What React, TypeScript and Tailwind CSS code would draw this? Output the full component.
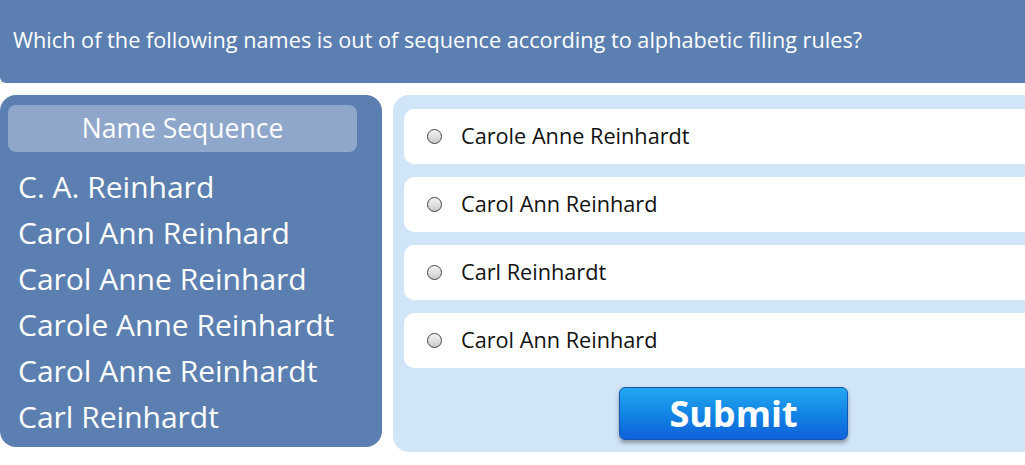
import React from 'react';

const names = [
    'C. A. Reinhard',
    'Carol Ann Reinhard',
    'Carol Anne Reinhard',
    'Carole Anne Reinhardt',
    'Carol Anne Reinhardt',
    'Carl Reinhardt',
];

const options = ['Carole Anne Reinhardt', 'Carol Ann Reinhard', 'Carl Reinhardt', 'Carol Ann Reinhard'];

const App: React.FC = () => {
    return (
        <div className="w-[1025px] h-[465px] overflow-hidden bg-white font-['Open_Sans',sans-serif]">
            {/* Question header */}
            <div className="w-[1060px] h-[83px] bg-[#5c7fb1] rounded-bl-md flex items-center px-[13px] pb-[3px]">
                <span className="text-[21.7px] text-white whitespace-nowrap">
                    Which of the following names is out of sequence according to alphabetic filing rules?
                </span>
            </div>

            <div className="flex gap-[11px] mt-[12px] w-[1100px]">
                {/* Name sequence panel */}
                <div className="w-[382px] h-[352px] shrink-0 rounded-[16px] bg-[#5c7fb1] pt-[10px] pl-[8px]">
                    <div className="w-[349px] h-[47px] rounded-[8px] bg-[#8fa7cb] flex items-center justify-center">
                        <span className="text-[26.5px] text-white">Name Sequence</span>
                    </div>
                    <div className="mt-[12px] ml-[10px] flex flex-col">
                        {names.map((n, i) => (
                            <div key={i} className="h-[46px] leading-[46px] text-[30px] text-white whitespace-nowrap">
                                {n}
                            </div>
                        ))}
                    </div>
                </div>

                {/* Answer options */}
                <div className="w-[681px] h-[357px] shrink-0 rounded-[16px] bg-[#d0e5f8] pt-[14px] px-[11px] flex flex-col">
                    <div className="flex flex-col gap-[13px]">
                        {options.map((o, i) => (
                            <label key={i} className="h-[55px] rounded-[10px] bg-white flex items-center pl-[23px] gap-[19px]">
                                <span className="w-[15px] h-[15px] rounded-full border border-[#444] bg-gradient-to-b from-[#f4f4f4] to-[#cccccc]" />
                                <span className="text-[21.7px] text-[#111]">{o}</span>
                            </label>
                        ))}
                    </div>
                    <button className="mt-[19px] mx-auto w-[229px] h-[53px] rounded-[6px] border border-[#1656b3] bg-gradient-to-b from-[#22a8ef] to-[#1160d9] shadow-[0_3px_4px_rgba(0,0,0,0.35)] flex items-center justify-center">
                        <span className="text-[36px] font-bold text-white leading-none">Submit</span>
                    </button>
                </div>
            </div>
        </div>
    );
};

export default App;
